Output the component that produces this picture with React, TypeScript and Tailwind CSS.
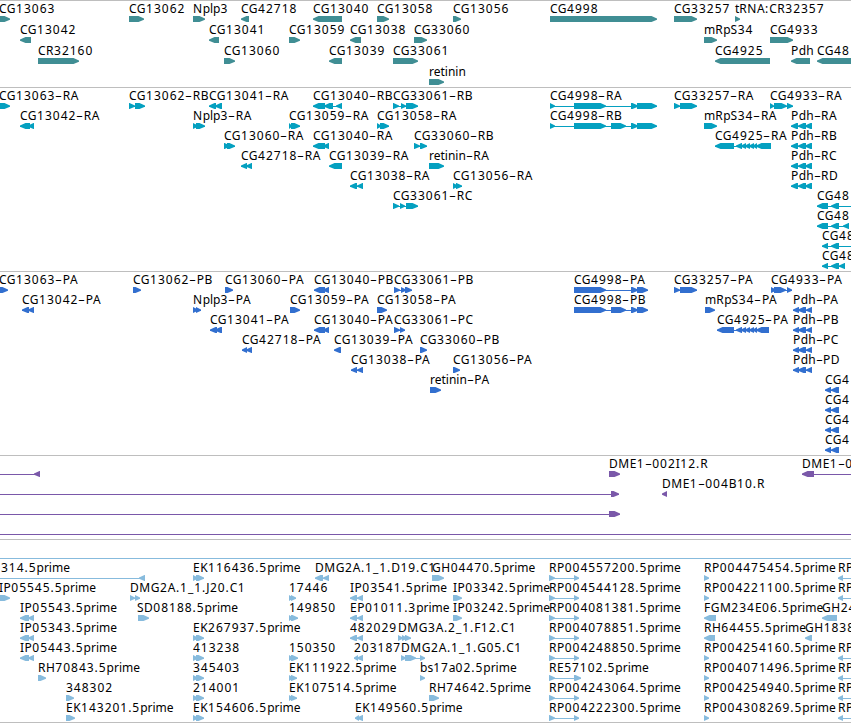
type Strand = "+" | "-";
type Span = [number, number];

interface Feature {
  label?: string;
  x: number;
  strand: Strand;
  blocks: Span[];
  // connector end points, when it runs past the first or last block
  line?: Span;
}

interface Track {
  name: string;
  color: string;
  className: string;
  rowClassName: string;
  rows: Feature[][];
}

const VIEW_WIDTH = 851;

const fwd = (label: string, ...blocks: Span[]): Feature => ({
  label,
  x: blocks[0][0],
  strand: "+",
  blocks,
});

const rev = (label: string, ...blocks: Span[]): Feature => ({
  label,
  x: blocks[0][0],
  strand: "-",
  blocks,
});

const toEdge = (feature: Feature): Feature => ({
  ...feature,
  line: [feature.x, VIEW_WIDTH],
});

const labelAt = (feature: Feature, x: number): Feature => ({ ...feature, x });

const plain = (strand: Strand, line: Span, ...blocks: Span[]): Feature => ({
  x: line[0],
  strand,
  blocks,
  line,
});

const genes: Feature[][] = [
  [
    labelAt(fwd("CG13063", [0, 10]), -1),
    fwd("CG13062", [129, 144]),
    fwd("Nplp3", [193, 205]),
    rev("CG42718", [241, 249]),
    rev("CG13040", [313, 342]),
    fwd("CG13058", [377, 389]),
    fwd("CG13056", [453, 461]),
    fwd("CG4998", [550, 657]),
    fwd("CG33257", [674, 697]),
    fwd("tRNA:CR32357", [735, 740]),
  ],
  [
    rev("CG13042", [20, 31]),
    rev("CG13041", [209, 219]),
    fwd("CG13059", [289, 300]),
    rev("CG13038", [350, 361]),
    fwd("CG33060", [414, 427]),
    fwd("mRpS34", [704, 717]),
    fwd("CG4933", [770, 793]),
  ],
  [
    fwd("CR32160", [38, 79]),
    fwd("CG13060", [224, 235]),
    rev("CG13039", [329, 342]),
    fwd("CG33061", [393, 418]),
    rev("CG4925", [715, 770]),
    rev("Pdh", [791, 810]),
    rev("CG48", [817, 860]),
  ],
  [fwd("retinin", [429, 444])],
];

const pdhExons: Span[] = [[791, 798], [798, 806], [805, 812]];
const pdhCds: Span[] = [[793, 799], [798, 806], [806, 812]];

const transcripts: Feature[][] = [
  [
    labelAt(fwd("CG13063-RA", [0, 10]), -1),
    fwd("CG13062-RB", [129, 135], [135, 145]),
    rev("CG13041-RA", [209, 216], [215, 222]),
    rev("CG13040-RB", [313, 325], [324, 333], [336, 342]),
    fwd("CG33061-RB", [393, 399], [401, 406], [406, 418]),
    fwd("CG4998-RA", [550, 555], [574, 606], [631, 638], [637, 657]),
    fwd("CG33257-RA", [674, 680], [680, 697]),
    fwd("CG4933-RA", [770, 774], [774, 787], [787, 793]),
  ],
  [
    rev("CG13042-RA", [20, 30], [28, 34]),
    fwd("Nplp3-RA", [193, 198], [196, 205]),
    fwd("CG13059-RA", [289, 292], [291, 300]),
    fwd("CG13058-RA", [377, 381], [380, 389]),
    fwd("CG4998-RB", [550, 555], [574, 606], [611, 626], [631, 638], [637, 657]),
    fwd("mRpS34-RA", [704, 717]),
    rev("Pdh-RA", ...pdhExons),
  ],
  [
    fwd("CG13060-RA", [224, 230], [227, 235]),
    rev("CG13040-RA", [313, 325], [323, 329]),
    fwd("CG33060-RB", [414, 420], [420, 427]),
    rev("CG4925-RA", [715, 734], [736, 742], [741, 746], [745, 750], [749, 754], [753, 757], [756, 771]),
    rev("Pdh-RB", ...pdhExons),
  ],
  [
    rev("CG42718-RA", [241, 247], [246, 252]),
    rev("CG13039-RA", [329, 342]),
    fwd("retinin-RA", [429, 444]),
    rev("Pdh-RC", ...pdhExons),
  ],
  [
    rev("CG13038-RA", [350, 357], [357, 363]),
    fwd("CG13056-RA", [453, 458], [456, 462]),
    rev("Pdh-RD", ...pdhExons),
  ],
  [
    fwd("CG33061-RC", [393, 399], [400, 405], [406, 418]),
    toEdge(rev("CG48", [817, 828], [831, 839])),
  ],
  [rev("CG48", [817, 828], [831, 839], [843, 849])],
  [toEdge(rev("CG48", [822, 828], [831, 839]))],
  [rev("CG48", [822, 828], [831, 839], [839, 845])],
];

const proteins: Feature[][] = [
  [
    labelAt(fwd("CG13063-PA", [0, 8]), -1),
    fwd("CG13062-PB", [133, 141]),
    fwd("CG13060-PA", [225, 233]),
    rev("CG13040-PB", [314, 325], [323, 329]),
    fwd("CG33061-PB", [394, 400], [401, 406], [405, 412]),
    fwd("CG4998-PA", [574, 606], [631, 638], [637, 648]),
    fwd("CG33257-PA", [674, 680], [680, 697]),
    fwd("CG4933-PA", [771, 776], [774, 786], [787, 792]),
  ],
  [
    rev("CG13042-PA", [22, 29], [28, 34]),
    fwd("Nplp3-PA", [193, 198], [196, 201]),
    fwd("CG13059-PA", [290, 300]),
    fwd("CG13058-PA", [377, 387]),
    fwd("CG4998-PB", [574, 606], [611, 626], [631, 638], [637, 648]),
    fwd("mRpS34-PA", [705, 715]),
    rev("Pdh-PA", ...pdhCds),
  ],
  [
    rev("CG13041-PA", [210, 217], [215, 222]),
    rev("CG13040-PA", [314, 325], [323, 329]),
    fwd("CG33061-PC", [394, 400], [400, 405]),
    rev("CG4925-PA", [717, 734], [736, 742], [741, 746], [745, 750], [749, 754], [753, 757], [756, 769]),
    rev("Pdh-PB", ...pdhCds),
  ],
  [
    rev("CG42718-PA", [242, 247], [246, 252]),
    rev("CG13039-PA", [334, 341]),
    fwd("CG33060-PB", [420, 427]),
    rev("Pdh-PC", ...pdhCds),
  ],
  [
    rev("CG13038-PA", [351, 357], [357, 363]),
    fwd("CG13056-PA", [453, 460]),
    rev("Pdh-PD", ...pdhCds),
  ],
  [fwd("retinin-PA", [430, 441]), rev("CG4", [825, 831], [831, 839])],
  [rev("CG4", [825, 831], [831, 839])],
  [rev("CG4", [825, 831], [831, 839])],
  [rev("CG4", [825, 831], [831, 839])],
];

const bacEnds: Feature[][] = [
  [
    plain("-", [0, 40], [34, 40]),
    fwd("DME1-002I12.R", [609, 620]),
    toEdge(rev("DME1-0", [802, 814])),
  ],
  [plain("+", [0, 619], [611, 619]), rev("DME1-004B10.R", [662, 667])],
  [plain("+", [0, 620], [609, 620])],
  [plain("+", [0, VIEW_WIDTH])],
];

const rpLeft = (label: string, end = 579) => fwd(label, [549, 555], [574, end]);
const rpRight = (label: string) => fwd(label, [704, 709]);
const rpEdge = () => toEdge(rev("RP", [838, 843]));

const ests: Feature[][] = [
  [plain("+", [0, VIEW_WIDTH])],
  [
    { label: "314.5prime", x: 1, strand: "-", blocks: [[139, 145]], line: [0, 145] },
    fwd("EK116436.5prime", [193, 198], [196, 204]),
    rev("DMG2A.1_1.D19.C1", [315, 323], [323, 329]),
    fwd("GH04470.5prime", [432, 444]),
    rpLeft("RP004557200.5prime"),
    rpRight("RP004475454.5prime"),
    rpEdge(),
  ],
  [
    labelAt(fwd("IP05545.5prime", [0, 10]), -1),
    fwd("DMG2A.1_1.J20.C1", [130, 135], [135, 140]),
    fwd("17446", [289, 293], [291, 296]),
    rev("IP03541.5prime", [350, 357], [357, 363]),
    fwd("IP03342.5prime", [453, 462]),
    rpLeft("RP004544128.5prime"),
    rpRight("RP004221100.5prime"),
    rpEdge(),
  ],
  [
    rev("IP05543.5prime", [20, 29], [28, 34]),
    labelAt(fwd("SD08188.5prime", [138, 149]), 137),
    fwd("149850", [289, 293], [291, 298]),
    rev("EP01011.3prime", [350, 357], [357, 363]),
    fwd("IP03242.5prime", [453, 462]),
    rpLeft("RP004081381.5prime"),
    rev("FGM234E06.5prime", [704, 716]),
    rev("GH24", [822, 837]),
  ],
  [
    rev("IP05343.5prime", [20, 29], [28, 34]),
    fwd("EK267937.5prime", [193, 198], [196, 204]),
    rev("482029", [350, 357], [357, 363]),
    fwd("DMG3A.2_1.F12.C1", [398, 403], [402, 407], [405, 411]),
    rpLeft("RP004078851.5prime"),
    rev("RH64455.5prime", [704, 715]),
    rev("GH1838", [805, 812]),
  ],
  [
    rev("IP05443.5prime", [20, 29], [28, 34]),
    fwd("413238", [193, 198], [196, 204]),
    fwd("150350", [289, 293], [291, 298]),
    rev("203187", [354, 358], [357, 363]),
    fwd("DMG2A.1_1.G05.C1", [401, 406], [405, 416], [420, 425]),
    rpLeft("RP004248850.5prime"),
    rpRight("RP004254160.5prime"),
    rpEdge(),
  ],
  [
    fwd("RH70843.5prime", [38, 46]),
    fwd("345403", [193, 198], [196, 204]),
    fwd("EK111922.5prime", [289, 293], [291, 297]),
    fwd("bs17a02.5prime", [420, 425]),
    rpLeft("RE57102.5prime", 581),
    rpRight("RP004071496.5prime"),
    rpEdge(),
  ],
  [
    fwd("348302", [66, 74]),
    fwd("214001", [193, 198], [196, 204]),
    fwd("EK107514.5prime", [289, 293], [291, 297]),
    fwd("RH74642.5prime", [429, 439]),
    rpLeft("RP004243064.5prime"),
    rpRight("RP004254940.5prime"),
    rpEdge(),
  ],
  [
    fwd("EK143201.5prime", [66, 75]),
    fwd("EK154606.5prime", [193, 198], [196, 204]),
    rev("EK149560.5prime", [355, 359], [357, 363]),
    rpLeft("RP004222300.5prime"),
    rpRight("RP004308269.5prime"),
    rpEdge(),
  ],
];

const tracks: Track[] = [
  { name: "genes", color: "#408e94", className: "h-[87px]", rowClassName: "h-[21px]", rows: genes },
  { name: "transcripts", color: "#04a0c0", className: "h-[184px]", rowClassName: "h-5", rows: transcripts },
  { name: "proteins", color: "#326fcf", className: "h-[184px]", rowClassName: "h-5", rows: proteins },
  { name: "bacs", color: "#7a58a9", className: "h-[84px]", rowClassName: "h-5", rows: bacEnds },
  { name: "ests", color: "#87bbdd", className: "h-[183px]", rowClassName: "h-5", rows: ests },
];

// Block with a pointed end in strand direction, 6px tall
const arrow = ([start, end]: Span, strand: Strand) => {
  const tip = Math.min(5.5, end - start);
  if (strand === "+") {
    return `M${start} 0H${end - tip}L${end} 2.4V3.8L${end - tip} 6H${start}Z`;
  }
  return `M${end} 0H${start + tip}L${start} 2.4V3.8L${start + tip} 6H${end}Z`;
};

const runClass = (run: string) => {
  if (run === "-") return "inline-block w-[7.5px] origin-left scale-x-[1.8] text-left";
  if (/^\d/.test(run)) return "tracking-[0.98px]";
  if (/^[A-Z]/.test(run)) return "tracking-[0.5px]";
  if (/^[a-z]/.test(run)) return "tracking-normal";
  return "tracking-[0.9px]";
};

const Label = ({ text }: { text: string }) => (
  <>
    {text.match(/\d+|[A-Z]+|[a-z]+|[^\dA-Za-z]/g)?.map((run, i) => (
      <span key={i} className={runClass(run)}>
        {run}
      </span>
    ))}
  </>
);

const FeatureGlyph = ({ feature, color }: { feature: Feature; color: string }) => {
  const { blocks, strand } = feature;
  const [from, to] = feature.line ?? [blocks[0][0], blocks[blocks.length - 1][1]];
  return (
    <>
      {feature.label && (
        <span
          className="absolute top-px whitespace-pre leading-[14px]"
          style={{ left: feature.x }}
        >
          <Label text={feature.label} />
        </span>
      )}
      <svg
        className="absolute top-[15px] h-1.5"
        style={{ left: from, width: to - from }}
        viewBox={`${from} 0 ${to - from} 6`}
        fill={color}
      >
        {(feature.line || blocks.length > 1) && (
          <rect x={from} y={3} width={to - from} height={1} />
        )}
        {blocks.map((block) => (
          <path key={block[0]} d={arrow(block, strand)} />
        ))}
      </svg>
    </>
  );
};

const TrackRows = ({ track }: { track: Track }) => (
  <section className={`flex flex-col border-t border-[#bebebe] ${track.className}`}>
    {track.rows.map((row, i) => (
      <div key={i} className={`relative shrink-0 ${track.rowClassName}`}>
        {row.map((feature, j) => (
          <FeatureGlyph key={j} feature={feature} color={track.color} />
        ))}
      </div>
    ))}
  </section>
);

export default function App() {
  return (
    <main className="h-[723px] w-[851px] overflow-hidden border-b border-[#bebebe] bg-white font-['Noto_Sans','DejaVu_Sans',sans-serif] text-[12px] text-black">
      {tracks.map((track) => (
        <TrackRows key={track.name} track={track} />
      ))}
    </main>
  );
}
